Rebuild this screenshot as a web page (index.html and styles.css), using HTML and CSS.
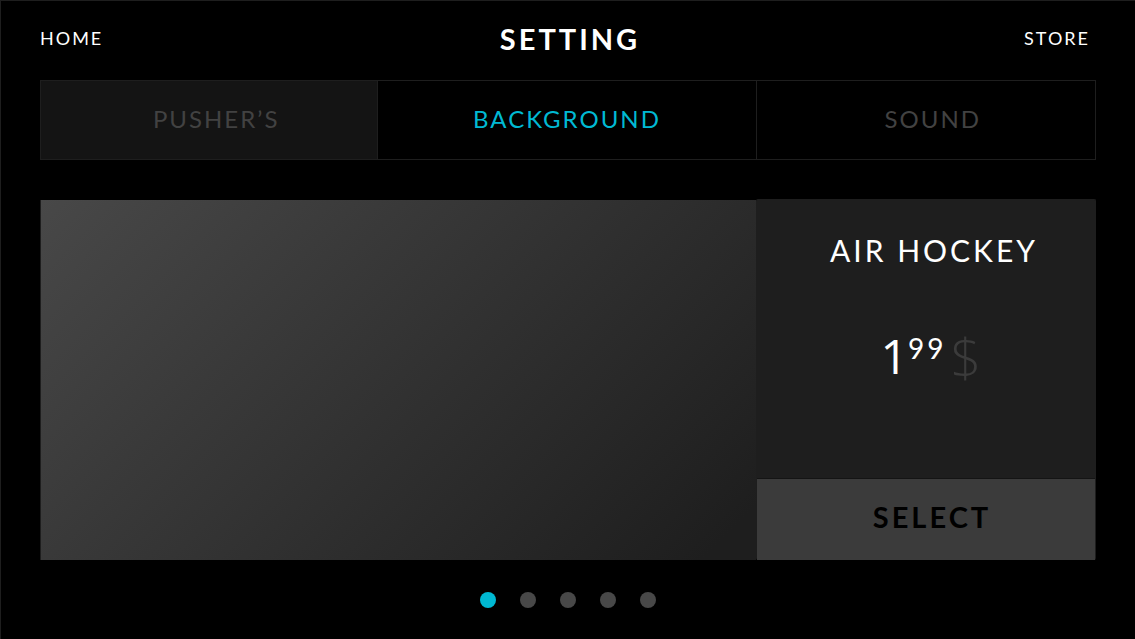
FILE: index.html
```html
<!DOCTYPE html>
<html lang="en">
<head>
<meta charset="utf-8">
<meta name="viewport" content="width=device-width, initial-scale=1">
<title>Setting</title>
<link rel="stylesheet" href="styles.css">
</head>
<body>
<div class="screen">
  <header class="topbar">
    <a class="topbar-link" href="#home">HOME</a>
    <h1 class="topbar-title">SETTING</h1>
    <a class="topbar-link topbar-link-end" href="#store">STORE</a>
  </header>
  <nav class="tabs" role="tablist" aria-label="Setting sections">
    <button class="tab tab-filled" type="button" role="tab" aria-selected="false">PUSHER’S</button>
    <button class="tab tab-active" type="button" role="tab" aria-selected="true">BACKGROUND</button>
    <button class="tab tab-offset" type="button" role="tab" aria-selected="false">SOUND</button>
  </nav>
  <main class="product">
    <div class="preview"></div>
    <section class="details">
      <div class="info">
        <h2 class="name">AIR HOCKEY</h2>
        <p class="price"><span class="whole">1</span><span class="cents">99</span><span class="currency">$</span></p>
      </div>
      <button class="select" type="button">SELECT</button>
    </section>
  </main>
  <div class="pager">
    <button class="dot dot-active" type="button" aria-label="Background 1" aria-current="true"></button>
    <button class="dot" type="button" aria-label="Background 2"></button>
    <button class="dot" type="button" aria-label="Background 3"></button>
    <button class="dot" type="button" aria-label="Background 4"></button>
    <button class="dot" type="button" aria-label="Background 5"></button>
  </div>
</div>
</body>
</html>
```
FILE: styles.css
```css
* {
  box-sizing: border-box;
}

body {
  margin: 0;
  background: #000;
  color: #fff;
  font-family: Lato, "Open Sans", sans-serif;
}

button {
  margin: 0;
  padding: 0;
  border: 0;
  background: none;
  color: inherit;
  font: inherit;
  cursor: pointer;
}

.screen {
  display: flex;
  flex-direction: column;
  min-height: 100vh;
  padding: 0 39px 31px;
  border-top: 1px solid #1e1e1e;
  border-left: 1px solid #1e1e1e;
}

.topbar {
  display: grid;
  grid-template-columns: 1fr auto 1fr;
  align-items: center;
  height: 79px;
  padding: 0 6px 4px 0;
}

.topbar-link {
  color: #fff;
  font-size: 18px;
  line-height: 24px;
  letter-spacing: 2px;
  padding-bottom: 2px;
  text-decoration: none;
}

.topbar-link-end {
  justify-self: end;
}

.topbar-title {
  margin: 0;
  padding-left: 10px;
  font-size: 29px;
  font-weight: 700;
  line-height: 36px;
  letter-spacing: 3px;
}

.tabs {
  display: grid;
  grid-template-columns: 338fr 379fr 339fr;
  height: 80px;
  border: 1px solid #1e1e1e;
}

.tab {
  padding-bottom: 4px;
  border-right: 1px solid #1e1e1e;
  color: #424242;
  font-size: 24px;
  font-weight: 400;
  letter-spacing: 2px;
}

.tab:last-child {
  border-right: 0;
}

.tab-filled {
  padding-left: 14px;
  background: #141414;
}

.tab-active {
  color: #00b9d3;
}

.tab-offset {
  padding-left: 14px;
}

.product {
  display: grid;
  grid-template-columns: 716fr 340fr;
  flex: 1;
  margin-top: 39px;
}

.preview {
  margin-top: 1px;
  border-left: 1px solid #1e1e1e;
  background: linear-gradient(135deg, #484848 0%, #1e1e1e 95%);
}

.details {
  display: flex;
  flex-direction: column;
  border: 1px solid #1e1e1e;
  border-bottom: 0;
  border-radius: 2px;
  background: #1e1e1e;
}

.info {
  flex: 1;
  padding: 30px 0 0 16px;
  border-bottom: 1px solid #141414;
  text-align: center;
}

.name {
  margin: 0;
  font-size: 30px;
  font-weight: 400;
  line-height: 40px;
  letter-spacing: 3px;
}

.price {
  display: flex;
  justify-content: center;
  margin: 58px 0 0;
  padding-right: 6px;
  line-height: 56px;
}

.whole {
  font-family: "Open Sans", "Noto Sans", sans-serif;
  font-size: 48px;
}

.cents {
  font-size: 28px;
  line-height: 40px;
  letter-spacing: 3px;
}

.currency {
  margin-left: 4px;
  color: #3b3b3b;
  font-family: "Open Sans", "Noto Sans", sans-serif;
  font-size: 54px;
  font-weight: 300;
}

.select {
  height: 81px;
  padding: 0 0 6px 12px;
  background: #3b3b3b;
  color: #000;
  font-size: 29px;
  font-weight: 700;
  letter-spacing: 3px;
}

.pager {
  display: flex;
  justify-content: center;
  gap: 24px;
  margin-top: 32px;
}

.dot {
  width: 16px;
  height: 16px;
  border-radius: 50%;
  background: #484848;
}

.dot-active {
  background: #00b9d3;
}
```
